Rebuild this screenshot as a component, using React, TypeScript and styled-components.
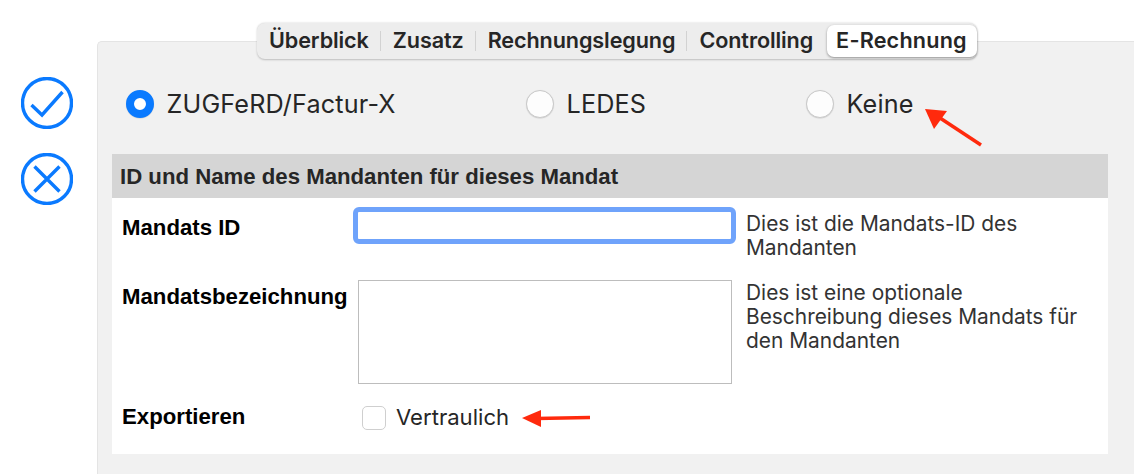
import React from "react";
import styled, { createGlobalStyle } from "styled-components";

const tabs = ["Überblick", "Zusatz", "Rechnungslegung", "Controlling", "E-Rechnung"];

const App = () => {
  return (
    <Page>
      <GlobalStyle />
      <ActionColumn>
        <ActionIcon viewBox="0 0 52 52">
          <circle cx="26" cy="26" r="24.5" />
          <path d="M10.5 28 L21 38 L41.5 15" />
        </ActionIcon>
        <ActionIcon viewBox="0 0 52 52">
          <circle cx="26" cy="26" r="24.5" />
          <path d="M13.5 13.5 L38.5 38.5 M38.5 13.5 L13.5 38.5" />
        </ActionIcon>
      </ActionColumn>
      <Panel>
        <TabBar>
          {tabs.map((tab, index) => (
            <Tab key={tab} $active={index === tabs.length - 1} $plain={index >= tabs.length - 2}>
              {tab}
            </Tab>
          ))}
        </TabBar>
        <RadioRow>
          <RadioOption $width={400}>
            <Radio $checked />
            <RadioLabel>ZUGFeRD/Factur-X</RadioLabel>
          </RadioOption>
          <RadioOption $width={280}>
            <Radio />
            <RadioLabel>LEDES</RadioLabel>
          </RadioOption>
          <RadioOption $width={200}>
            <Radio />
            <RadioLabel>Keine</RadioLabel>
            <KeineArrow viewBox="0 0 60 40">
              <path className="line" d="M56 37 L12 8" />
              <path className="head" d="M0 1 L22 3 L9 21 Z" />
            </KeineArrow>
          </RadioOption>
        </RadioRow>
        <Section>
          <SectionHeader>ID und Name des Mandanten für dieses Mandat</SectionHeader>
          <FormGrid>
            <FieldLabel $top={8}>Mandats ID</FieldLabel>
            <TextInput type="text" />
            <Description $top={4}>Dies ist die Mandats-ID des Mandanten</Description>
            <FieldLabel $top={5}>Mandatsbezeichnung</FieldLabel>
            <TextBox />
            <Description $top={1}>Dies ist eine optionale Beschreibung dieses Mandats für den Mandanten</Description>
            <FieldLabel $top={-1}>Exportieren</FieldLabel>
            <CheckRow>
              <CheckBox />
              <CheckLabel>Vertraulich</CheckLabel>
              <VertraulichArrow viewBox="0 0 70 20">
                <path className="line" d="M68 9.5 L14 10.5" />
                <path className="head" d="M0 10 L19 2 L19 19 Z" />
              </VertraulichArrow>
            </CheckRow>
          </FormGrid>
        </Section>
      </Panel>
    </Page>
  );
};

const GlobalStyle = createGlobalStyle`
  html,
  body {
    margin: 0;
    padding: 0;
    height: 474px;
    overflow: hidden;
    background: #ffffff;
  }
`;

const Page = styled.div`
  display: flex;
  width: 1134px;
  height: 474px;
  overflow: hidden;
  font-family: Inter, "Liberation Sans", sans-serif;
`;

const ActionColumn = styled.div`
  width: 97px;
  flex: none;
  display: flex;
  flex-direction: column;
  gap: 24px;
  padding: 77px 0 0 21px;
  box-sizing: border-box;
`;

const ActionIcon = styled.svg`
  width: 52px;
  height: 52px;
  fill: none;
  stroke: #0a7aff;
  stroke-width: 3.4;
`;

const Panel = styled.div`
  position: relative;
  flex: 1;
  margin-top: 41px;
  padding: 0 26px 0 14px;
  background: #f1f1f1;
  border: 1.5px solid #e4e4e4;
  border-right: none;
  border-bottom: none;
  border-top-left-radius: 5px;
`;

const TabBar = styled.div`
  position: absolute;
  top: -19.5px;
  left: 159px;
  display: flex;
  align-items: center;
  height: 36px;
  background: #ededed;
  border-radius: 8px;
  box-shadow: 0 0.5px 2px rgba(0, 0, 0, 0.22);
`;

const Tab = styled.div<{ $active?: boolean; $plain?: boolean }>`
  position: relative;
  height: 32px;
  line-height: 31px;
  margin-left: ${(props) => (props.$active ? "2px" : "0")};
  padding: ${(props) => (props.$active ? "0 10px 0 9px" : "0 12px")};
  font-size: 21.6px;
  font-weight: 600;
  letter-spacing: ${(props) => (props.$active ? "0.2px" : "-0.1px")};
  color: #262626;
  border-radius: 7px;
  background: ${(props) => (props.$active ? "#ffffff" : "transparent")};
  box-shadow: ${(props) => (props.$active ? "0 1px 2.5px rgba(0, 0, 0, 0.4)" : "none")};

  &::after {
    content: "";
    display: ${(props) => (props.$plain ? "none" : "block")};
    position: absolute;
    right: 0;
    top: 6px;
    height: 20px;
    width: 1px;
    background: #d2d2d2;
  }
`;

const RadioRow = styled.div`
  display: flex;
  align-items: center;
  height: 112px;
  padding: 12px 0 0 14px;
  box-sizing: border-box;
`;

const RadioOption = styled.div<{ $width: number }>`
  position: relative;
  display: flex;
  align-items: center;
  gap: 12.5px;
  width: ${(props) => props.$width}px;
`;

const Radio = styled.span<{ $checked?: boolean }>`
  width: 28px;
  height: 28px;
  flex: none;
  box-sizing: border-box;
  border-radius: 50%;
  background: ${(props) => (props.$checked ? "#ffffff" : "#fdfdfd")};
  border: ${(props) => (props.$checked ? "8px solid #0a7aff" : "1px solid #c9c9c9")};
  box-shadow: 0 0.5px 1px rgba(0, 0, 0, 0.15);
`;

const RadioLabel = styled.span`
  font-size: 25.2px;
  letter-spacing: 0.15px;
  line-height: 28px;
  margin-top: -1px;
  color: #262626;
`;

const KeineArrow = styled.svg`
  position: absolute;
  left: 119px;
  top: 18px;
  width: 60px;
  height: 40px;

  .line {
    stroke: #ff2a0d;
    stroke-width: 3.5;
    fill: none;
  }

  .head {
    fill: #ff2a0d;
  }
`;

const Section = styled.div`
  background: #ffffff;
  height: 300px;
`;

const SectionHeader = styled.div`
  height: 44px;
  line-height: 45px;
  padding-left: 8px;
  background: #d5d5d5;
  font-family: "Liberation Sans", Arial, sans-serif;
  font-size: 22.2px;
  font-weight: 700;
  color: #262626;
`;

const FormGrid = styled.div`
  display: grid;
  grid-template-columns: 233px 381px 1fr;
  grid-template-rows: 72px 126px auto;
  padding: 10px 24px 0 10px;
`;

const FieldLabel = styled.div<{ $top: number }>`
  font-family: "Liberation Sans", Arial, sans-serif;
  font-size: 22.2px;
  font-weight: 700;
  line-height: 24px;
  color: #000000;
  margin-top: ${(props) => props.$top}px;
  white-space: nowrap;
`;

const TextInput = styled.input`
  width: 383px;
  height: 37px;
  margin: -1px 0 0 -2px;
  box-sizing: border-box;
  border: 5px solid #6fa3fb;
  border-radius: 6px;
  background: #ffffff;
  outline: none;
`;

const TextBox = styled.div`
  width: 374px;
  height: 104px;
  margin-left: 3px;
  box-sizing: border-box;
  border: 1px solid #bdbdbd;
  background: #ffffff;
`;

const Description = styled.div<{ $top: number }>`
  padding: ${(props) => props.$top}px 0 0 10px;
  font-size: 20.9px;
  line-height: 24px;
  color: #333333;
`;

const CheckRow = styled.div`
  position: relative;
  display: flex;
  align-items: center;
  gap: 10px;
  padding-left: 7px;
  height: 24px;
`;

const CheckBox = styled.span`
  width: 24px;
  height: 24px;
  box-sizing: border-box;
  border: 1px solid #cfcfcf;
  border-radius: 5px;
  background: #ffffff;
`;

const CheckLabel = styled.span`
  font-size: 22.1px;
  margin-top: -2px;
  color: #262626;
`;

const VertraulichArrow = styled.svg`
  position: absolute;
  left: 167px;
  top: 2px;
  width: 70px;
  height: 20px;

  .line {
    stroke: #ff2a0d;
    stroke-width: 3.5;
    fill: none;
  }

  .head {
    fill: #ff2a0d;
  }
`;

export default App;
